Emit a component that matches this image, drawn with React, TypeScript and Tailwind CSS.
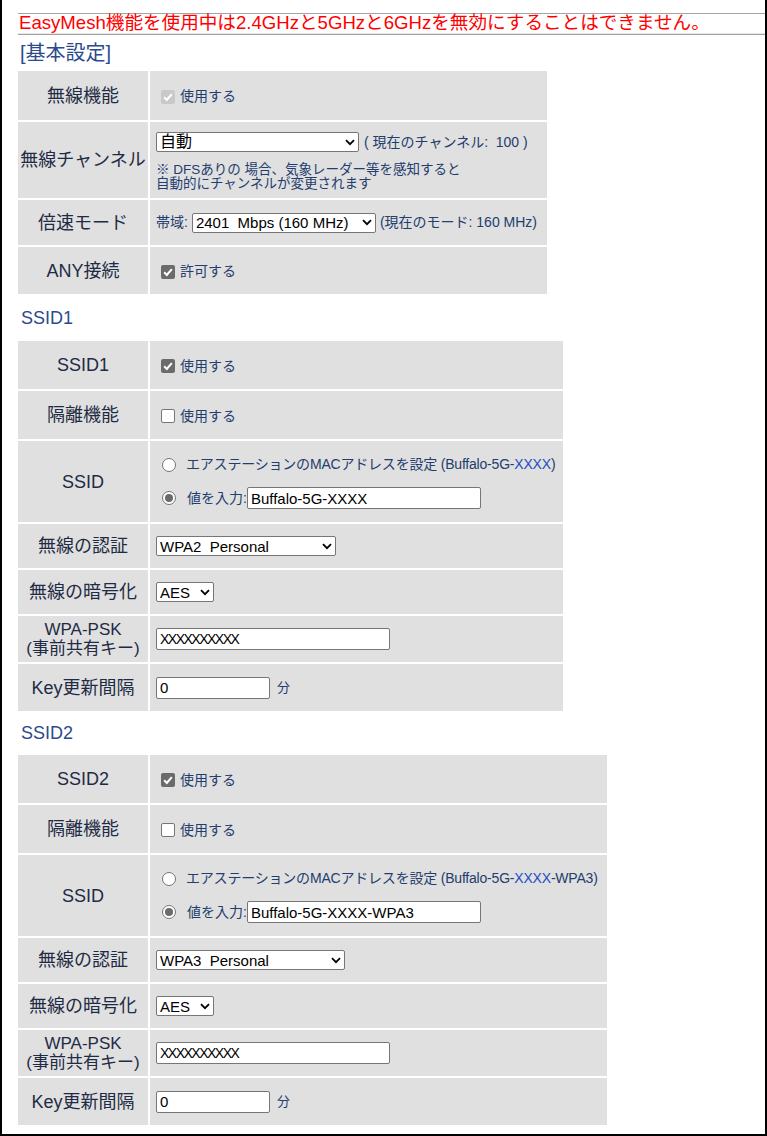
import React from "react";

const navy = "text-[#233d6e]";

function Check({ checked, disabled }: { checked?: boolean; disabled?: boolean }) {
  if (!checked) {
    return <span className="inline-block w-[14px] h-[14px] rounded-[2px] border border-[#767676] bg-white shrink-0" />;
  }
  return (
    <span
      className={`inline-flex items-center justify-center w-[14px] h-[14px] rounded-[2px] shrink-0 ${
        disabled ? "bg-[#c9c9c9]" : "bg-[#6b6b6b]"
      }`}
    >
      <svg width="12" height="12" viewBox="0 0 11 11">
        <path d="M2 5.8 L4.4 8.2 L9 2.8" fill="none" stroke="white" strokeWidth="1.9" />
      </svg>
    </span>
  );
}

function Radio({ checked }: { checked?: boolean }) {
  return (
    <span className="inline-flex items-center justify-center w-[14px] h-[14px] rounded-full border border-[#767676] bg-white shrink-0">
      {checked && <span className="w-[8px] h-[8px] rounded-full bg-[#6b6b6b]" />}
    </span>
  );
}

function Chevron() {
  return (
    <svg width="10" height="7" viewBox="0 0 10 7" className="shrink-0">
      <path d="M1 1.2 L5 5.2 L9 1.2" fill="none" stroke="black" strokeWidth="1.8" />
    </svg>
  );
}

function Select({ value, w, text = "text-[15px]" }: { value: string; w: string; text?: string }) {
  return (
    <div
      className={`${w} h-[20px] flex items-center justify-between border border-[#767676] rounded-[2px] bg-white pl-[3px] pr-[3px] ${text} text-black leading-none`}
    >
      <span className="whitespace-pre">{value}</span>
      <Chevron />
    </div>
  );
}

function Input({ value, w, text = "text-[15px]" }: { value: string; w: string; text?: string }) {
  return (
    <div
      className={`${w} h-[22px] flex items-center border border-[#767676] rounded-[2px] bg-white pl-[3px] ${text} text-black leading-none`}
    >
      {value}
    </div>
  );
}

function CheckLabel({ checked, disabled, label }: { checked?: boolean; disabled?: boolean; label: string }) {
  return (
    <div className="flex items-center gap-[5px] pl-[5px] pt-[2px]">
      <Check checked={checked} disabled={disabled} />
      <span className={`text-[14px] ${navy}`}>{label}</span>
    </div>
  );
}

function Row({ label, h, children }: { label: React.ReactNode; h: string; children: React.ReactNode }) {
  return (
    <>
      <div className={`${h} bg-[#e0e0e0] flex items-center justify-center text-center text-[18px] leading-[18px] text-[#1f2b44]`}>
        {label}
      </div>
      <div className={`${h} bg-[#e0e0e0] flex flex-col justify-center pl-[6px]`}>{children}</div>
    </>
  );
}

function SsidTable({ n, w, mac, ssid, auth, authW }: { n: number; w: string; mac: string; ssid: string; auth: string; authW: string }) {
  return (
    <div className={`grid grid-cols-[130px_1fr] gap-[2px] ${w}`}>
      <Row label={`SSID${n}`} h="h-[48px]">
        <CheckLabel checked label="使用する" />
      </Row>
      <Row label="隔離機能" h="h-[48px]">
        <CheckLabel label="使用する" />
      </Row>
      <Row label="SSID" h="h-[81px]">
        <div className="flex flex-col gap-[12px] pl-[6px]">
          <div className="flex items-center gap-[10px]">
            <Radio />
            <span className={`text-[14px] tracking-[-0.2px] ${navy} whitespace-nowrap`}>
              エアステーションのMACアドレスを設定 (Buffalo-5G-<span className="text-[#1d4cc4]">XXXX</span>
              {mac})
            </span>
          </div>
          <div className="flex items-center">
            <Radio checked />
            <span className={`text-[14px] ${navy} ml-[11px]`}>値を入力:</span>
            <Input value={ssid} w="w-[234px]" />
          </div>
        </div>
      </Row>
      <Row label="無線の認証" h="h-[44px]">
        <Select value={auth} w={authW} />
      </Row>
      <Row label="無線の暗号化" h="h-[44px]">
        <Select value="AES" w="w-[58px]" />
      </Row>
      <Row
        label={
          <span className="leading-[19px] text-[17px]">
            WPA-PSK
            <br />
            (事前共有キー)
          </span>
        }
        h="h-[46px]"
      >
        <Input value="XXXXXXXXXX" w="w-[234px]" text="text-[14px] tracking-[-1.5px]" />
      </Row>
      <Row label="Key更新間隔" h="h-[47px]">
        <div className="flex items-center gap-[7px]">
          <Input value="0" w="w-[114px]" />
          <span className={`text-[13px] ${navy}`}>分</span>
        </div>
      </Row>
    </div>
  );
}

export default function App() {
  return (
    <div className="w-[767px] h-[1136px] border-l-2 border-r-2 border-b-2 border-black bg-white font-['Liberation_Sans','Noto_Sans_CJK_JP',sans-serif]">
      <div className="pt-[13px] pl-[16px]">
        {/* warning bar */}
        <div className="border-t border-b border-[#a3a3a3] h-[22px] flex items-center">
          <div className="w-full border-b border-[#e6e6e6] h-full flex items-center pl-[1px] text-[18.6px] leading-none text-[#ff0000] whitespace-nowrap">
            EasyMesh機能を使用中は2.4GHzと5GHzと6GHzを無効にすることはできません。
          </div>
        </div>
        <div className="h-[36px] flex items-center pl-[2px] text-[20px] text-[#2b4a8e] leading-none">[基本設定]</div>

        {/* basic */}
        <div className="grid grid-cols-[130px_1fr] gap-[2px] w-[529px]">
          <Row label="無線機能" h="h-[49px]">
            <CheckLabel checked disabled label="使用する" />
          </Row>
          <Row label="無線チャンネル" h="h-[76px]">
            <div className="flex items-center gap-[5px] pt-[2px]">
              <Select value="自動" w="w-[203px]" text="text-[16px]" />
              <span className={`text-[14px] ${navy} whitespace-pre`}>( 現在のチャンネル:  100 )</span>
            </div>
            <div className={`text-[13.5px] leading-[14px] ${navy} mt-[10px]`}>
              ※ DFSありの 場合、気象レーダー等を感知すると
              <br />
              自動的にチャンネルが変更されます
            </div>
          </Row>
          <Row label="倍速モード" h="h-[45px]">
            <div className="flex items-center gap-[4px]">
              <span className={`text-[14px] ${navy}`}>帯域:</span>
              <Select value="2401  Mbps (160 MHz)" w="w-[184px]" text="text-[15px]" />
              <span className={`text-[14px] ${navy} whitespace-pre`}>(現在のモード: 160 MHz)</span>
            </div>
          </Row>
          <Row label="ANY接続" h="h-[47px]">
            <CheckLabel checked label="許可する" />
          </Row>
        </div>

        <div className="h-[47px] flex items-center pl-[3px] text-[18px] text-[#2b4a8e] leading-none">SSID1</div>
        <SsidTable n={1} w="w-[545px]" mac="" ssid="Buffalo-5G-XXXX" auth="WPA2  Personal" authW="w-[180px]" />

        <div className="h-[44px] flex items-center pl-[3px] text-[18px] text-[#2b4a8e] leading-none">SSID2</div>
        <SsidTable n={2} w="w-[589px]" mac="-WPA3" ssid="Buffalo-5G-XXXX-WPA3" auth="WPA3  Personal" authW="w-[189px]" />
      </div>
    </div>
  );
}
